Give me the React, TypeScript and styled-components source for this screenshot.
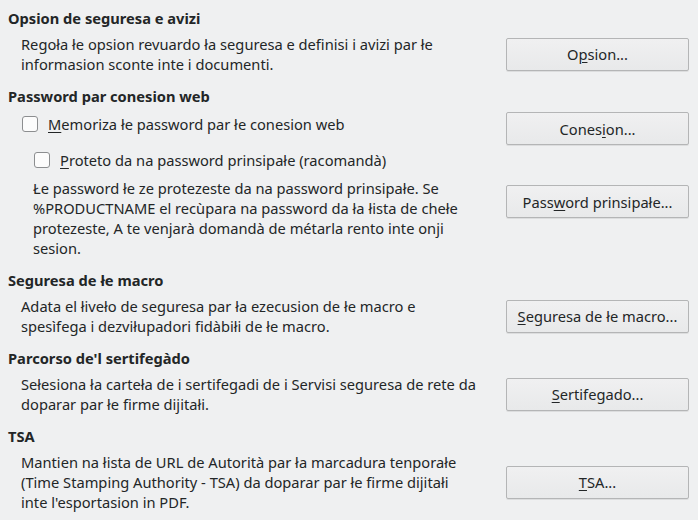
import React from "react";
import styled, { createGlobalStyle } from "styled-components";

const GlobalStyle = createGlobalStyle`
  html, body {
    margin: 0;
    padding: 0;
    background: #eff0f1;
  }
  body {
    font-family: "Noto Sans", "DejaVu Sans", sans-serif;
    font-size: 14.67px;
    color: #232627;
  }
`;

type Mn = { text: string; at: number };

function Mnemonic({ text, at }: Mn) {
  return (
    <span>
      {text.slice(0, at)}
      <Key>{text.charAt(at)}</Key>
      {text.slice(at + 1)}
    </span>
  );
}

function App() {
  return (
    <>
      <GlobalStyle />
      <Page>
        <Section>
          <Heading>Opsion de seguresa e avizi</Heading>
          <Row>
            <Description>
              Regoła łe opsion revuardo ła seguresa e definisi i avizi par łe
              <br />
              informasion sconte inte i documenti.
            </Description>
            <Button>
              <Mnemonic text="Opsion..." at={1} />
            </Button>
          </Row>
        </Section>

        <Section>
          <Heading>Password par conesion web</Heading>
          <PasswordRow>
            <LeftColumn>
              <Check indent={14}>
                <Box />
                <Mnemonic text="Memoriza łe password par łe conesion web" at={0} />
              </Check>
              <Check indent={26} top={16}>
                <Box />
                <Mnemonic text="Proteto da na password prinsipałe (racomandà)" at={0} />
              </Check>
              <Description indent={25} top={8}>
                Łe password łe ze protezeste da na password prinsipałe. Se
                <br />
                %PRODUCTNAME el recùpara na password da ła łista de chełe
                <br />
                protezeste, A te venjarà domandà de métarla rento inte onji
                <br />
                sesion.
              </Description>
            </LeftColumn>
            <RightColumn>
              <Button>
                <Mnemonic text="Conesion..." at={5} />
              </Button>
              <Button>
                <Mnemonic text="Password prinsipałe..." at={4} />
              </Button>
            </RightColumn>
          </PasswordRow>
        </Section>

        <Section>
          <Heading>Seguresa de łe macro</Heading>
          <Row>
            <Description>
              Adata el łiveło de seguresa par ła ezecusion de łe macro e
              <br />
              spesìfega i dezviłupadori fidàbiłi de łe macro.
            </Description>
            <Button>
              <Mnemonic text="Seguresa de łe macro..." at={0} />
            </Button>
          </Row>
        </Section>

        <Section>
          <Heading>Parcorso de'l sertifegàdo</Heading>
          <Row>
            <Description>
              Sełesiona ła carteła de i sertifegadi de i Servisi seguresa de rete da
              <br />
              doparar par łe firme dijitałi.
            </Description>
            <Button>
              <Mnemonic text="Sertifegado..." at={0} />
            </Button>
          </Row>
        </Section>

        <Section>
          <Heading>TSA</Heading>
          <Row>
            <Description>
              Mantien na łista de URL de Autorità par ła marcadura tenporałe
              <br />
              (Time Stamping Authority - TSA) da doparar par łe firme dijitałi
              <br />
              inte l'esportasion in PDF.
            </Description>
            <Button>
              <Mnemonic text="TSA..." at={0} />
            </Button>
          </Row>
        </Section>
      </Page>
    </>
  );
}

export default App;

const Page = styled.div`
  width: 698px;
  height: 520px;
  box-sizing: border-box;
  padding: 8px 9px 0 8px;
  display: flex;
  flex-direction: column;
  gap: 12px;
  overflow: hidden;
`;

const Section = styled.div`
  display: flex;
  flex-direction: column;
  gap: 6px;
`;

const Heading = styled.div`
  font-weight: bold;
  line-height: 20px;
`;

const Row = styled.div`
  display: flex;
  align-items: center;
  justify-content: space-between;
`;

const Description = styled.div<{ indent?: number; top?: number }>`
  margin-left: ${(p) => p.indent ?? 13}px;
  margin-top: ${(p) => p.top ?? 0}px;
  line-height: 20px;
  white-space: nowrap;
`;

const PasswordRow = styled.div`
  display: flex;
  justify-content: space-between;
  align-items: flex-start;
`;

const LeftColumn = styled.div`
  display: flex;
  flex-direction: column;
  padding-top: 2px;
`;

const RightColumn = styled.div`
  display: flex;
  flex-direction: column;
  gap: 40px;
`;

const Check = styled.label<{ indent: number; top?: number }>`
  display: flex;
  align-items: center;
  gap: 10px;
  margin-left: ${(p) => p.indent}px;
  margin-top: ${(p) => p.top ?? 0}px;
  line-height: 20px;
  height: 20px;
`;

const Box = styled.span`
  width: 14px;
  height: 14px;
  border: 1px solid #8c8e90;
  border-radius: 3px;
  background: #fcfcfc;
`;

const Button = styled.button`
  width: 183px;
  height: 33px;
  box-sizing: border-box;
  flex: none;
  font-family: inherit;
  font-size: 14.67px;
  color: #232627;
  border: 1px solid #b4b5b6;
  border-radius: 2px;
  background: linear-gradient(#f0f0f1, #e8e9ea);
  box-shadow: 0 1px 0 rgba(0, 0, 0, 0.08);
  padding: 0;
  cursor: pointer;
`;

const Key = styled.span`
  text-decoration: underline;
  text-underline-offset: 2px;
`;
